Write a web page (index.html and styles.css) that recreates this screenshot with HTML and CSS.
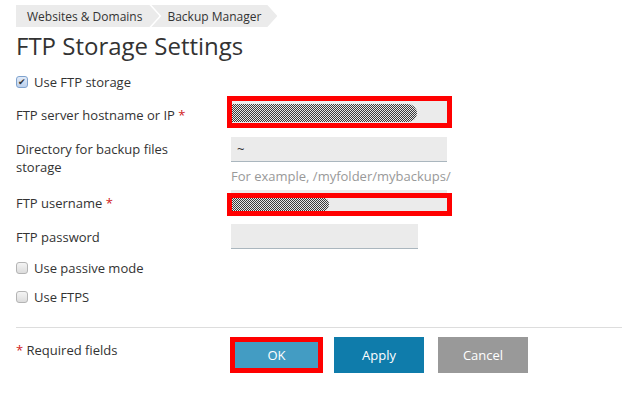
FILE: index.html
```html
<!DOCTYPE html>
<html lang="en">
<head>
    <meta charset="UTF-8">
    <meta name="viewport" content="width=device-width, initial-scale=1.0">
    <title>FTP Storage Settings</title>
    <link rel="stylesheet" href="styles.css">
</head>
<body>
    <div class="page">
        <div class="crumbs">
            <span class="crumb first">Websites &amp; Domains</span>
            <span class="crumb">Backup Manager</span>
        </div>
        <h1 class="title">FTP Storage Settings</h1>

        <label class="check-row first-check"><span class="box checked">&#10004;</span>Use FTP storage</label>

        <div class="row row-host">
            <div class="label">FTP server hostname or IP <span class="req">*</span></div>
            <div class="field">
                <input type="text" class="text-input" id="hostname">
                <span class="blur blur-host"></span>
                <div class="mark mark-host"></div>
            </div>
        </div>

        <div class="row row-dir">
            <div class="label">Directory for backup files storage</div>
            <div class="field">
                <input type="text" class="text-input" id="directory" value="~">
                <div class="hint">For example, /myfolder/mybackups/</div>
            </div>
        </div>

        <div class="row row-user">
            <div class="label">FTP username <span class="req">*</span></div>
            <div class="field">
                <input type="text" class="text-input" id="username">
                <span class="blur blur-user"></span>
                <div class="mark mark-user"></div>
            </div>
        </div>

        <div class="row row-pass">
            <div class="label">FTP password</div>
            <div class="field">
                <input type="password" class="text-input short" id="password">
            </div>
        </div>

        <label class="check-row"><span class="box"></span>Use passive mode</label>
        <label class="check-row"><span class="box"></span>Use FTPS</label>

        <div class="actions">
            <div class="required"><span class="req">*</span> Required fields</div>
            <div class="buttons">
                <button class="btn ok">OK</button>
                <button class="btn apply">Apply</button>
                <button class="btn cancel">Cancel</button>
            </div>
        </div>
    </div>
</body>
</html>
```

FILE: styles.css
```css
body{
    margin: 0;
    background-color: #fff;
    font-family: "Open Sans", "Liberation Sans", sans-serif;
    font-size: 13px;
    color: #333;
}
.page{
    padding: 5px 0 0 16px;
}
.crumbs{
    display: flex;
    height: 22px;
    font-size: 12px;
}
.crumb{
    display: flex;
    align-items: center;
    background-color: #ebebeb;
    padding: 0 16px 0 16px;
    margin-right: -8px;
    clip-path: polygon(0 0, calc(100% - 10px) 0, 100% 50%, calc(100% - 10px) 100%, 0 100%, 10px 50%);
}
.crumb.first{
    padding-left: 11px;
    padding-right: 17px;
    clip-path: polygon(0 0, calc(100% - 10px) 0, 100% 50%, calc(100% - 10px) 100%, 0 100%);
}
.title{
    font-size: 24px;
    font-weight: 400;
    color: #333;
    margin: 2px 0 10px;
    line-height: 34px;
}
.check-row{
    display: flex;
    align-items: center;
    height: 18px;
    margin-bottom: 11px;
}
.box{
    width: 12px;
    height: 12px;
    box-sizing: border-box;
    border: 1px solid #b4b4b4;
    border-radius: 3px;
    background: linear-gradient(#f4f4f4, #dcdcdc);
    margin-right: 6px;
    font-size: 9px;
    line-height: 10px;
    text-align: center;
    color: #333;
}
.box.checked{
    border-color: #7fa3cf;
    background: linear-gradient(#e2ebf8, #bcd0ec);
}
.first-check{
    margin-bottom: 8px;
}
.row{
    display: flex;
}
.label{
    width: 215px;
    line-height: 18px;
    padding-top: 4px;
    padding-right: 20px;
    box-sizing: border-box;
}
.req{
    color: #d0211c;
}
.field{
    position: relative;
}
.text-input{
    display: block;
    width: 216px;
    height: 25px;
    box-sizing: border-box;
    border: none;
    border-bottom: 1px solid #aab6be;
    background-color: #ebebeb;
    padding: 0 6px;
    font-family: "Open Sans", "Liberation Sans", sans-serif;
    font-size: 13px;
    color: #333;
}
.text-input.short{
    width: 187px;
}
.hint{
    color: #999;
    line-height: 18px;
    margin-top: 5px;
}
.row-host{
    margin-bottom: 13px;
}
.row-host .label{
    padding-top: 7px;
}
.row-dir{
    margin-bottom: 5px;
}
.row-dir .label{
    padding-top: 3px;
}
.row-user{
    margin-bottom: 9px;
}
.row-pass{
    margin-bottom: 10px;
}
.blur{
    position: absolute;
    left: 1px;
    background: repeating-conic-gradient(#3a3a3a 0 25%, #e6e6e6 0 50%) 0 0 / 2px 2px;
    border-radius: 0 10px 10px 0;
}
.blur-host{
    top: 5px;
    width: 185px;
    height: 18px;
}
.blur-user{
    top: 7px;
    width: 97px;
    height: 15px;
    border-radius: 0 8px 8px 0;
}
.mark{
    position: absolute;
    border: 5px solid #f00;
    box-sizing: border-box;
}
.mark-host{
    left: -4px;
    top: -3px;
    width: 225px;
    height: 32px;
}
.mark-user{
    left: -4px;
    top: 3px;
    width: 225px;
    height: 23px;
}
.actions{
    display: flex;
    border-top: 1px solid #ddd;
    margin-top: 21px;
    padding-top: 9px;
}
.required{
    width: 214px;
    padding-top: 4px;
    line-height: 18px;
}
.buttons{
    display: flex;
}
.btn{
    width: 90px;
    height: 36px;
    border: none;
    color: #fff;
    font-family: "Open Sans", "Liberation Sans", sans-serif;
    font-size: 13px;
    margin-right: 14px;
    cursor: pointer;
}
.ok{
    width: 93px;
    background-color: #439cc3;
    border: 5px solid #f00;
    margin-right: 11px;
}
.apply{
    background-color: #0f7cab;
}
.cancel{
    background-color: #999;
}
```
